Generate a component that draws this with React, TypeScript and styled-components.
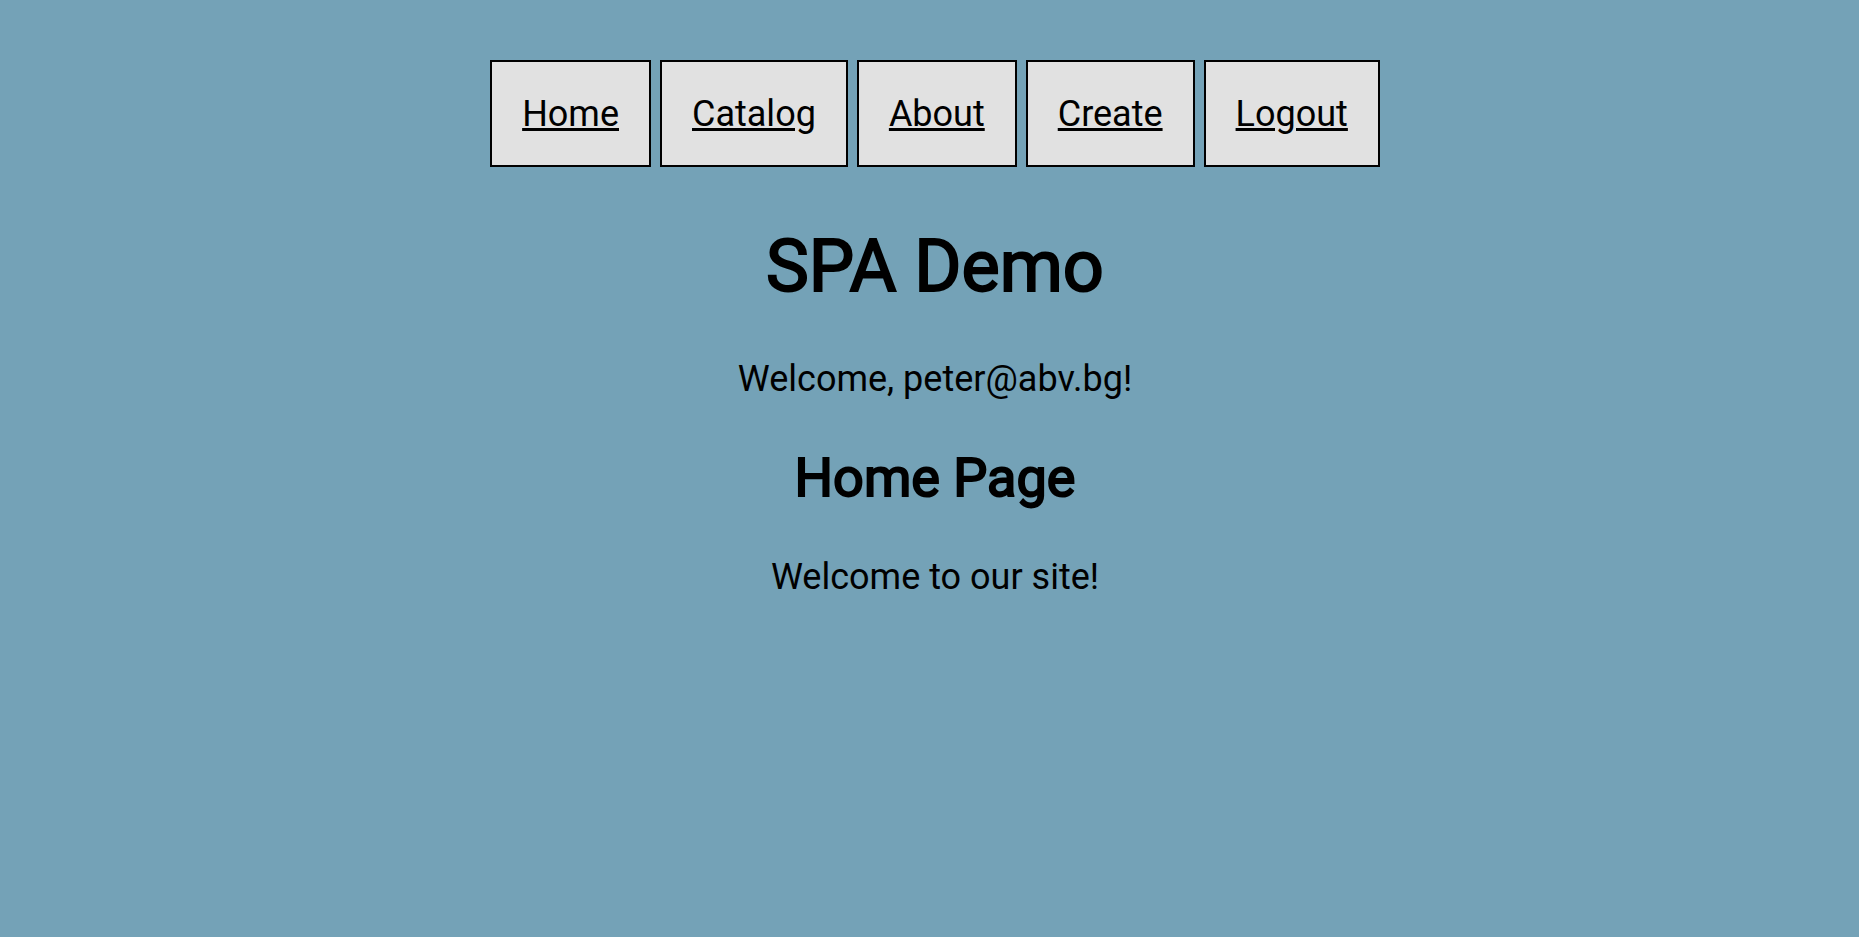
import React from "react";
import styled, { createGlobalStyle } from "styled-components";

const GlobalStyle = createGlobalStyle`
  body {
    margin: 0;
    background: #74a2b7;
    color: #000;
    font-family: Roboto, sans-serif;
    font-size: 36px;
    line-height: 43px;
  }
`;

const Page = styled.div`
  padding: 60px 0 0 11px;
  text-align: center;
`;

const Nav = styled.nav`
  display: flex;
  justify-content: center;
  gap: 9px;
`;

const NavLink = styled.a`
  padding: 31px 30px 29px;
  border: 2px solid #000;
  background: #e1e1e1;
  color: inherit;
  text-decoration-thickness: 3px;
`;

const Title = styled.h1`
  margin: 58px 0 49px;
  font-size: 72px;
  line-height: 84px;
  font-weight: 400;
  -webkit-text-stroke: 2px #000;
`;

const Subtitle = styled.h2`
  margin: 45px 0 46px;
  font-size: 54px;
  line-height: 64px;
  font-weight: 400;
  -webkit-text-stroke: 2px #000;
`;

const Text = styled.p`
  margin: 36px 0;
`;

const links = ["Home", "Catalog", "About", "Create", "Logout"];

export default function App() {
  return (
    <Page>
      <GlobalStyle />
      <Nav>
        {links.map((label) => (
          <NavLink key={label} href={`#${label.toLowerCase()}`}>
            {label}
          </NavLink>
        ))}
      </Nav>
      <header>
        <Title>SPA Demo</Title>
        <Text>Welcome, peter@abv.bg!</Text>
      </header>
      <main>
        <Subtitle>Home Page</Subtitle>
        <Text>Welcome to our site!</Text>
      </main>
    </Page>
  );
}
